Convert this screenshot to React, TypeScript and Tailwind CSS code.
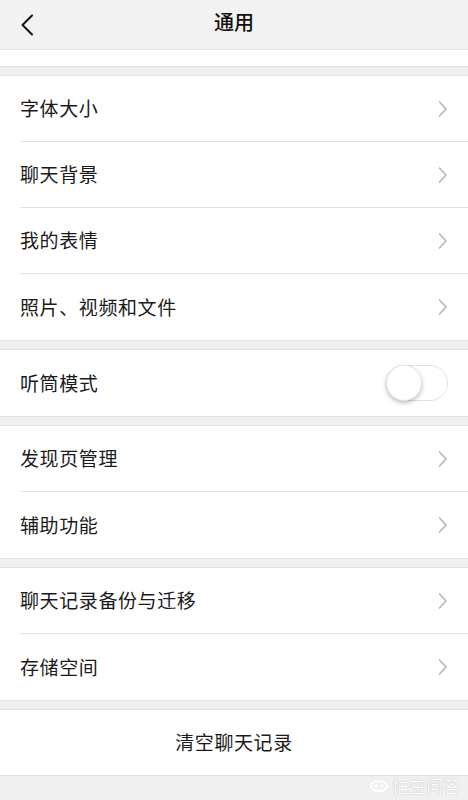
import React from 'react';

const font = { fontFamily: '"Noto Sans CJK SC", "Noto Sans", sans-serif' };

const Chevron: React.FC = () => (
  <svg width="10" height="18" viewBox="0 0 10 18" fill="none" className="shrink-0">
    <path d="M1.5 2 L8 9 L1.5 16" stroke="#b3b3b3" strokeWidth="1.5" strokeLinecap="round" strokeLinejoin="round" />
  </svg>
);

interface RowProps {
  label: string;
  last?: boolean;
  right?: React.ReactNode;
}

const Row: React.FC<RowProps> = ({ label, last, right }) => (
  <div className="pl-5 bg-white shrink-0">
    <div className={`h-[66px] flex items-center justify-between pr-5 ${last ? '' : 'border-b border-[#e3e3e3]'}`}>
      <span className="text-[19px] text-[#1a1a1a] tracking-[0.6px]">{label}</span>
      {right ?? <Chevron />}
    </div>
  </div>
);

const Gap: React.FC = () => (
  <div className="h-[10px] shrink-0 bg-[#f0f0f0] border-y border-[#e2e2e2]" />
);

const Toggle: React.FC = () => (
  <div className="relative w-[62px] h-[36px] rounded-full border border-[#e2e2e2] bg-white">
    <div className="absolute -left-px -top-px w-[36px] h-[36px] rounded-full bg-white shadow-[0_2px_4px_rgba(0,0,0,0.25)] border border-[#e6e6e6]" />
  </div>
);

export default function App() {
  return (
    <div className="w-[468px] h-[800px] bg-[#f0f0f0] overflow-hidden flex flex-col" style={font}>
      {/* Nav bar */}
      <div className="h-[50px] shrink-0 bg-[#f2f2f2] border-b border-[#e4e4e4] flex items-center relative">
        <div className="pl-[20px] w-[60px]">
          <svg width="16" height="22" viewBox="0 0 16 22" fill="none">
            <path d="M12 1.5 L2.5 11 L12 20.5" stroke="#111" strokeWidth="2" strokeLinecap="round" strokeLinejoin="round" />
          </svg>
        </div>
        <div className="flex-1 text-center text-[20px] font-medium text-[#111] pr-[60px] -mt-[6px]">通用</div>
      </div>

      {/* Scrolled-off white row remnant */}
      <div className="h-[16px] shrink-0 bg-white" />
      <Gap />

      <Row label="字体大小" />
      <Row label="聊天背景" />
      <Row label="我的表情" />
      <Row label="照片、视频和文件" last />

      <Gap />
      <Row label="听筒模式" last right={<Toggle />} />

      <Gap />
      <Row label="发现页管理" />
      <Row label="辅助功能" last />

      <Gap />
      <Row label="聊天记录备份与迁移" />
      <Row label="存储空间" last />

      <Gap />
      <div className="h-[66px] shrink-0 bg-white flex items-center justify-center border-b border-[#e2e2e2]">
        <span className="text-[19px] text-[#1a1a1a] tracking-[0.6px]">清空聊天记录</span>
      </div>

      <div className="flex-1 bg-[#f0f0f0] relative">
        <div className="absolute right-[8px] bottom-[2px] flex items-center gap-[3px] text-white text-[17px] [text-shadow:0_0_1px_rgba(0,0,0,0.35)]">
          <svg width="20" height="16" viewBox="0 0 20 16" fill="none">
            <ellipse cx="10" cy="9" rx="8" ry="5" stroke="white" strokeWidth="2" />
            <circle cx="7" cy="9" r="1.4" fill="white" />
            <circle cx="13" cy="9" r="1.4" fill="white" />
          </svg>
          <span>悟空问答</span>
        </div>
      </div>
    </div>
  );
}
